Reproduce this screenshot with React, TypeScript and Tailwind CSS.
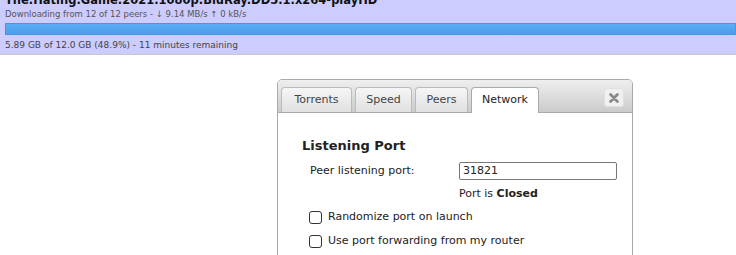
import React from 'react';

const tabs = [
  { name: 'Torrents', w: 'w-[71px]' },
  { name: 'Speed', w: 'w-[57px]' },
  { name: 'Peers', w: 'w-[53px]' },
  { name: 'Network', w: 'w-[68px]' },
];

const Checkbox = ({ label }: { label: string }) => (
  <label className="h-[16px] flex items-center gap-[6px]">
    <span className="inline-block w-[13px] h-[13px] rounded-[3px] border border-[#333] bg-white" />
    <span>{label}</span>
  </label>
);

export default function App() {
  return (
    <div className="w-[736px] h-[255px] overflow-hidden bg-white text-[#222] font-['DejaVu_Sans',sans-serif]">
      {/* Torrent row */}
      <div className="h-[55px] bg-[#ccccff] border-b border-[#c8c8c8] pl-[5px] overflow-hidden">
        <div className="mt-[-6px] text-[11.5px] font-bold leading-[13px] whitespace-nowrap text-[#111]">
          The.Hating.Game.2021.1080p.BluRay.DD5.1.x264-playHD
        </div>
        <div className="text-[8.5px] leading-[11px] text-[#555] mt-[2px] whitespace-nowrap">
          Downloading from 12 of 12 peers - ↓ 9.14 MB/s ↑ 0 kB/s
        </div>
        <div className="mt-[3px] h-[12px] border border-[#4a96e0] bg-gradient-to-b from-[#5aaef7] to-[#4d9de8]" />
        <div className="text-[9px] leading-[11px] text-[#444] mt-[5px] whitespace-nowrap">
          5.89 GB of 12.0 GB (48.9%) - 11 minutes remaining
        </div>
      </div>

      {/* Preferences dialog */}
      <div className="ml-[277px] mt-[24px] w-[356px] h-[200px] border border-[#aaa] rounded-t-[5px] bg-white">
        <div className="h-[33px] flex items-end justify-between pl-[3px] pr-[8px] rounded-t-[4px] border-b border-[#aaa] bg-gradient-to-b from-[#efefef] to-[#cbcbcb]">
          <div className="flex gap-[3px] text-[11px]">
            {tabs.map((t) => (
              <div
                key={t.name}
                className={
                  t.name === 'Network'
                    ? `${t.w} h-[26px] flex items-center justify-center rounded-t-[4px] border border-b-0 border-[#aaa] bg-white text-[#222] mb-[-1px]`
                    : `${t.w} h-[25px] flex items-center justify-center rounded-t-[4px] border border-b-0 border-[#bbb] bg-gradient-to-b from-[#f6f6f6] to-[#e0e0e0] text-[#444]`
                }
              >
                {t.name}
              </div>
            ))}
          </div>
          <div className="self-center mt-[3px] w-[20px] h-[19px] rounded-[3px] bg-[#f0f0f0] border border-[#e0e0e0] flex items-center justify-center">
            <svg width="10" height="10" viewBox="0 0 10 10">
              <path d="M1.6 1.6 L8.4 8.4 M8.4 1.6 L1.6 8.4" stroke="#8a8a8a" strokeWidth="2.8" strokeLinecap="round" />
            </svg>
          </div>
        </div>
        <div className="pl-[24px] pt-[25px] text-[11px]">
          <div className="text-[13px] leading-[16px] font-bold text-[#222]">Listening Port</div>
          <div className="pl-[8px] mt-[8px] flex items-center">
            <span className="w-[149px]">Peer listening port:</span>
            <div className="w-[158px] h-[18px] border border-[#777] rounded-[2px] px-[3px] text-[11px] leading-[16px]">31821</div>
          </div>
          <div className="ml-[157px] mt-[7px] leading-[14px]">
            Port is <b>Closed</b>
          </div>
          <div className="pl-[7px] mt-[8px] flex flex-col gap-[8px]">
            <Checkbox label="Randomize port on launch" />
            <Checkbox label="Use port forwarding from my router" />
          </div>
        </div>
      </div>
    </div>
  );
}
